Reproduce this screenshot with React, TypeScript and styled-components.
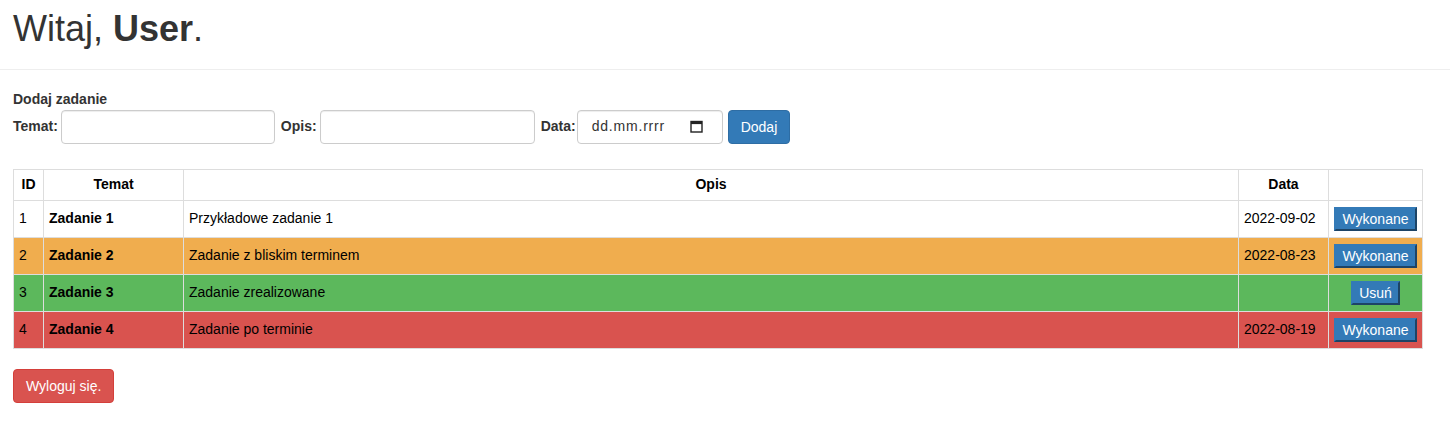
import React from 'react'
import styled, { createGlobalStyle } from 'styled-components'

const GlobalStyle = createGlobalStyle`
  body {
    margin: 0;
    font-family: "Liberation Sans", Arial, sans-serif;
    font-size: 14px;
    line-height: 1.42857;
    color: #333;
    background: #fff;
  }
  * { box-sizing: border-box; }
`

type Status = 'normal' | 'soon' | 'done' | 'late'

type Task = {
  id: number
  title: string
  desc: string
  date: string
  status: Status
}

const tasks: Task[] = [
  { id: 1, title: 'Zadanie 1', desc: 'Przykładowe zadanie 1', date: '2022-09-02', status: 'normal' },
  { id: 2, title: 'Zadanie 2', desc: 'Zadanie z bliskim terminem', date: '2022-08-23', status: 'soon' },
  { id: 3, title: 'Zadanie 3', desc: 'Zadanie zrealizowane', date: '', status: 'done' },
  { id: 4, title: 'Zadanie 4', desc: 'Zadanie po terminie', date: '2022-08-19', status: 'late' },
]

const rowColors: Record<Status, string> = {
  normal: '#fff',
  soon: '#f0ad4e',
  done: '#5cb85c',
  late: '#d9534f',
}

export default function App() {
  return (
    <>
      <GlobalStyle />
      <Header>
        <Title>
          Witaj, <b>User</b>.
        </Title>
      </Header>
      <Main>
        <FormTitle>Dodaj zadanie</FormTitle>
        <FormRow>
          <Label>Temat:</Label>
          <TextInput type='text' $w={214} />
          <Label>Opis:</Label>
          <TextInput type='text' $w={215} />
          <Label $gap={1}>Data:</Label>
          <DateBox>
            <span>dd.mm.rrrr</span>
            <svg width='13' height='13' viewBox='0 0 13 13'>
              <rect x='1' y='1.5' width='11' height='10.5' fill='none' stroke='#222' strokeWidth='1.4' />
              <rect x='1' y='1.5' width='11' height='2.6' fill='#222' />
            </svg>
          </DateBox>
          <PrimaryButton>Dodaj</PrimaryButton>
        </FormRow>

        <Table>
          <colgroup>
            <col style={{ width: 30 }} />
            <col style={{ width: 140 }} />
            <col style={{ width: 1055 }} />
            <col style={{ width: 90 }} />
            <col style={{ width: 94 }} />
          </colgroup>
          <thead>
            <tr>
              <Th>ID</Th>
              <Th>Temat</Th>
              <Th>Opis</Th>
              <Th>Data</Th>
              <Th></Th>
            </tr>
          </thead>
          <tbody>
            {tasks.map(t => (
              <Row key={t.id} $bg={rowColors[t.status]}>
                <Td>{t.id}</Td>
                <Td><b>{t.title}</b></Td>
                <Td>{t.desc}</Td>
                <Td>{t.date}</Td>
                <Td $center>
                  <ActionButton>{t.status === 'done' ? 'Usuń' : 'Wykonane'}</ActionButton>
                </Td>
              </Row>
            ))}
          </tbody>
        </Table>

        <DangerButton>Wyloguj się.</DangerButton>
      </Main>
    </>
  )
}

const Header = styled.div`
  padding: 9px 13px 0;
  border-bottom: 1px solid #eee;
  margin-right: 1px;
`

const Title = styled.h1`
  margin: 0 0 20px;
  font-size: 36px;
  font-weight: 400;
  line-height: 1.1;
  color: #333;
`

const Main = styled.div`
  padding: 20px 13px;
`

const FormTitle = styled.div`
  font-weight: bold;
`

const FormRow = styled.div`
  display: flex;
  align-items: center;
  margin-bottom: 25px;
`

const Label = styled.label<{ $gap?: number }>`
  font-weight: bold;
  margin-right: ${p => p.$gap ?? 3}px;
`

const TextInput = styled.input<{ $w: number }>`
  width: ${p => p.$w}px;
  height: 34px;
  padding: 6px 12px;
  font-size: 14px;
  border: 1px solid #ccc;
  border-radius: 4px;
  box-shadow: inset 0 1px 1px rgba(0, 0, 0, 0.075);
  margin-right: 6px;
  outline: none;
`

const DateBox = styled.div`
  width: 146px;
  height: 34px;
  display: flex;
  align-items: center;
  justify-content: space-between;
  padding: 0 19px 0 14px;
  border: 1px solid #ccc;
  border-radius: 4px;
  box-shadow: inset 0 1px 1px rgba(0, 0, 0, 0.075);
  margin-right: 5px;
  color: #333;
  font-size: 14px;
  letter-spacing: 0.8px;
  background: #fff;
`

const PrimaryButton = styled.button`
  height: 34px;
  padding: 6px 12px;
  font-family: inherit;
  font-size: 14px;
  color: #fff;
  background: #337ab7;
  border: 1px solid #2e6da4;
  border-radius: 4px;
`

const Table = styled.table`
  width: 1409px;
  table-layout: fixed;
  border-collapse: collapse;
  margin-bottom: 20px;
  color: #000;
`

const Th = styled.th`
  padding: 5px;
  border: 1px solid #ddd;
  text-align: center;
  font-weight: bold;
`

const Row = styled.tr<{ $bg: string }>`
  background: ${p => p.$bg};
`

const Td = styled.td<{ $center?: boolean }>`
  padding: 0 5px;
  height: 37px;
  border: 1px solid #ddd;
  text-align: ${p => (p.$center ? 'center' : 'left')};
  vertical-align: middle;
  white-space: nowrap;
`

const ActionButton = styled.button`
  font-family: inherit;
  font-size: 14px;
  line-height: 16px;
  padding: 2px 6px;
  color: #fff;
  background: #337ab7;
  border: 2px solid;
  border-color: #337ab7 #1d4466 #1d4466 #337ab7;
  vertical-align: middle;
`

const DangerButton = styled.button`
  height: 34px;
  padding: 6px 12px;
  font-family: inherit;
  font-size: 14px;
  color: #fff;
  background: #d9534f;
  border: 1px solid #d43f3a;
  border-radius: 4px;
`
